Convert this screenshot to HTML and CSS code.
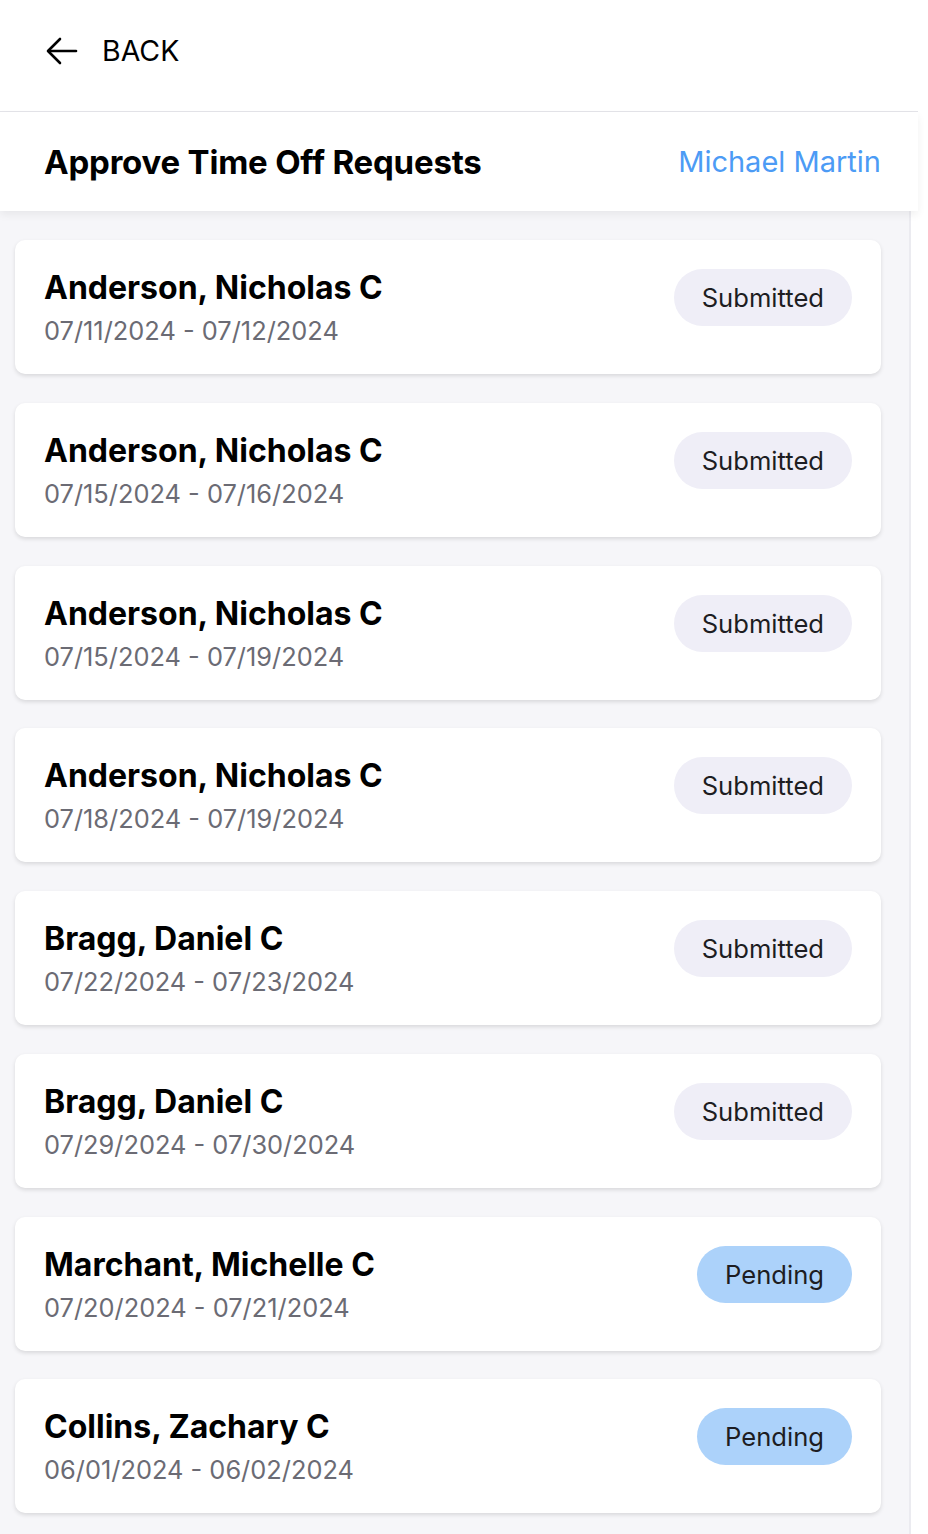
FILE: index.html
```html
<!DOCTYPE html>
<html lang="en">
<head>
    <meta charset="UTF-8">
    <meta name="viewport" content="width=device-width, initial-scale=1.0">
    <title>Approve Time Off Requests</title>
    <link rel="stylesheet" href="styles.css">
</head>
<body>
<div class="app">
    <div class="topbar">
        <a class="back" href="#">
            <svg width="32" height="28" viewBox="0 0 32 28" fill="none" stroke="#000" stroke-width="2.6" stroke-linecap="round" stroke-linejoin="round">
                <path d="M30 14H3"/>
                <path d="M14 2L2 14l12 12"/>
            </svg>
            <span>BACK</span>
        </a>
    </div>

    <div class="titlebar">
        <h1>Approve Time Off Requests</h1>
        <span class="user">Michael Martin</span>
    </div>

    <div class="list">
        <div class="card">
            <div class="info">
                <div class="name">Anderson, Nicholas C</div>
                <div class="dates">07/11/2024 - 07/12/2024</div>
            </div>
            <span class="badge badge-submitted">Submitted</span>
        </div>
        <div class="card">
            <div class="info">
                <div class="name">Anderson, Nicholas C</div>
                <div class="dates">07/15/2024 - 07/16/2024</div>
            </div>
            <span class="badge badge-submitted">Submitted</span>
        </div>
        <div class="card">
            <div class="info">
                <div class="name">Anderson, Nicholas C</div>
                <div class="dates">07/15/2024 - 07/19/2024</div>
            </div>
            <span class="badge badge-submitted">Submitted</span>
        </div>
        <div class="card">
            <div class="info">
                <div class="name">Anderson, Nicholas C</div>
                <div class="dates">07/18/2024 - 07/19/2024</div>
            </div>
            <span class="badge badge-submitted">Submitted</span>
        </div>
        <div class="card">
            <div class="info">
                <div class="name">Bragg, Daniel C</div>
                <div class="dates">07/22/2024 - 07/23/2024</div>
            </div>
            <span class="badge badge-submitted">Submitted</span>
        </div>
        <div class="card">
            <div class="info">
                <div class="name">Bragg, Daniel C</div>
                <div class="dates">07/29/2024 - 07/30/2024</div>
            </div>
            <span class="badge badge-submitted">Submitted</span>
        </div>
        <div class="card">
            <div class="info">
                <div class="name">Marchant, Michelle C</div>
                <div class="dates">07/20/2024 - 07/21/2024</div>
            </div>
            <span class="badge badge-pending">Pending</span>
        </div>
        <div class="card">
            <div class="info">
                <div class="name">Collins, Zachary C</div>
                <div class="dates">06/01/2024 - 06/02/2024</div>
            </div>
            <span class="badge badge-pending">Pending</span>
        </div>
    </div>
</div>
</body>
</html>
```

FILE: styles.css
```css
body {
    margin: 0;
    font-family: Inter, "Noto Sans", sans-serif;
    background-color: #fff;
    color: #000;
}
.app {
    width: 918px;
}
.topbar {
    height: 111px;
    display: flex;
    align-items: center;
    padding-left: 46px;
    border-bottom: 1px solid #e4e4e9;
}
.back {
    display: flex;
    align-items: center;
    gap: 24px;
    color: #000;
    text-decoration: none;
    font-size: 28.5px;
    margin-top: -10px;
}
.titlebar {
    position: relative;
    z-index: 1;
    height: 99px;
    display: flex;
    align-items: center;
    justify-content: space-between;
    padding: 0 37px 0 44px;
    background: #fff;
    box-shadow: 0 4px 8px rgba(0, 0, 0, 0.06);
}
h1 {
    margin: 0;
    font-size: 33px;
    font-weight: 700;
    letter-spacing: -0.2px;
}
.user {
    font-size: 29px;
    color: #4c9bf5;
}
.list {
    width: 909px;
    background-color: #f6f6f9;
    border-right: 2px solid #ebebf0;
    padding: 29px 0 30px;
    display: flex;
    flex-direction: column;
    gap: 28.75px;
}
.card {
    margin: 0 28px 0 15px;
    height: 134px;
    box-sizing: border-box;
    background: #fff;
    border-radius: 10px;
    box-shadow: 0 2px 4px rgba(0, 0, 0, 0.12);
    display: flex;
    justify-content: space-between;
    align-items: flex-start;
    padding: 29px 29px 0 29px;
}
.name {
    font-size: 32px;
    font-weight: 700;
    line-height: 38px;
}
.dates {
    font-size: 25.4px;
    color: #6b6b74;
    line-height: 34px;
    margin-top: 7px;
}
.badge {
    display: inline-block;
    height: 57px;
    line-height: 57px;
    padding: 0 28px;
    border-radius: 29px;
    font-size: 25.6px;
    color: #1d1d22;
}
.badge-submitted {
    background-color: #efeef7;
}
.badge-pending {
    background-color: #acd2fa;
}
```
